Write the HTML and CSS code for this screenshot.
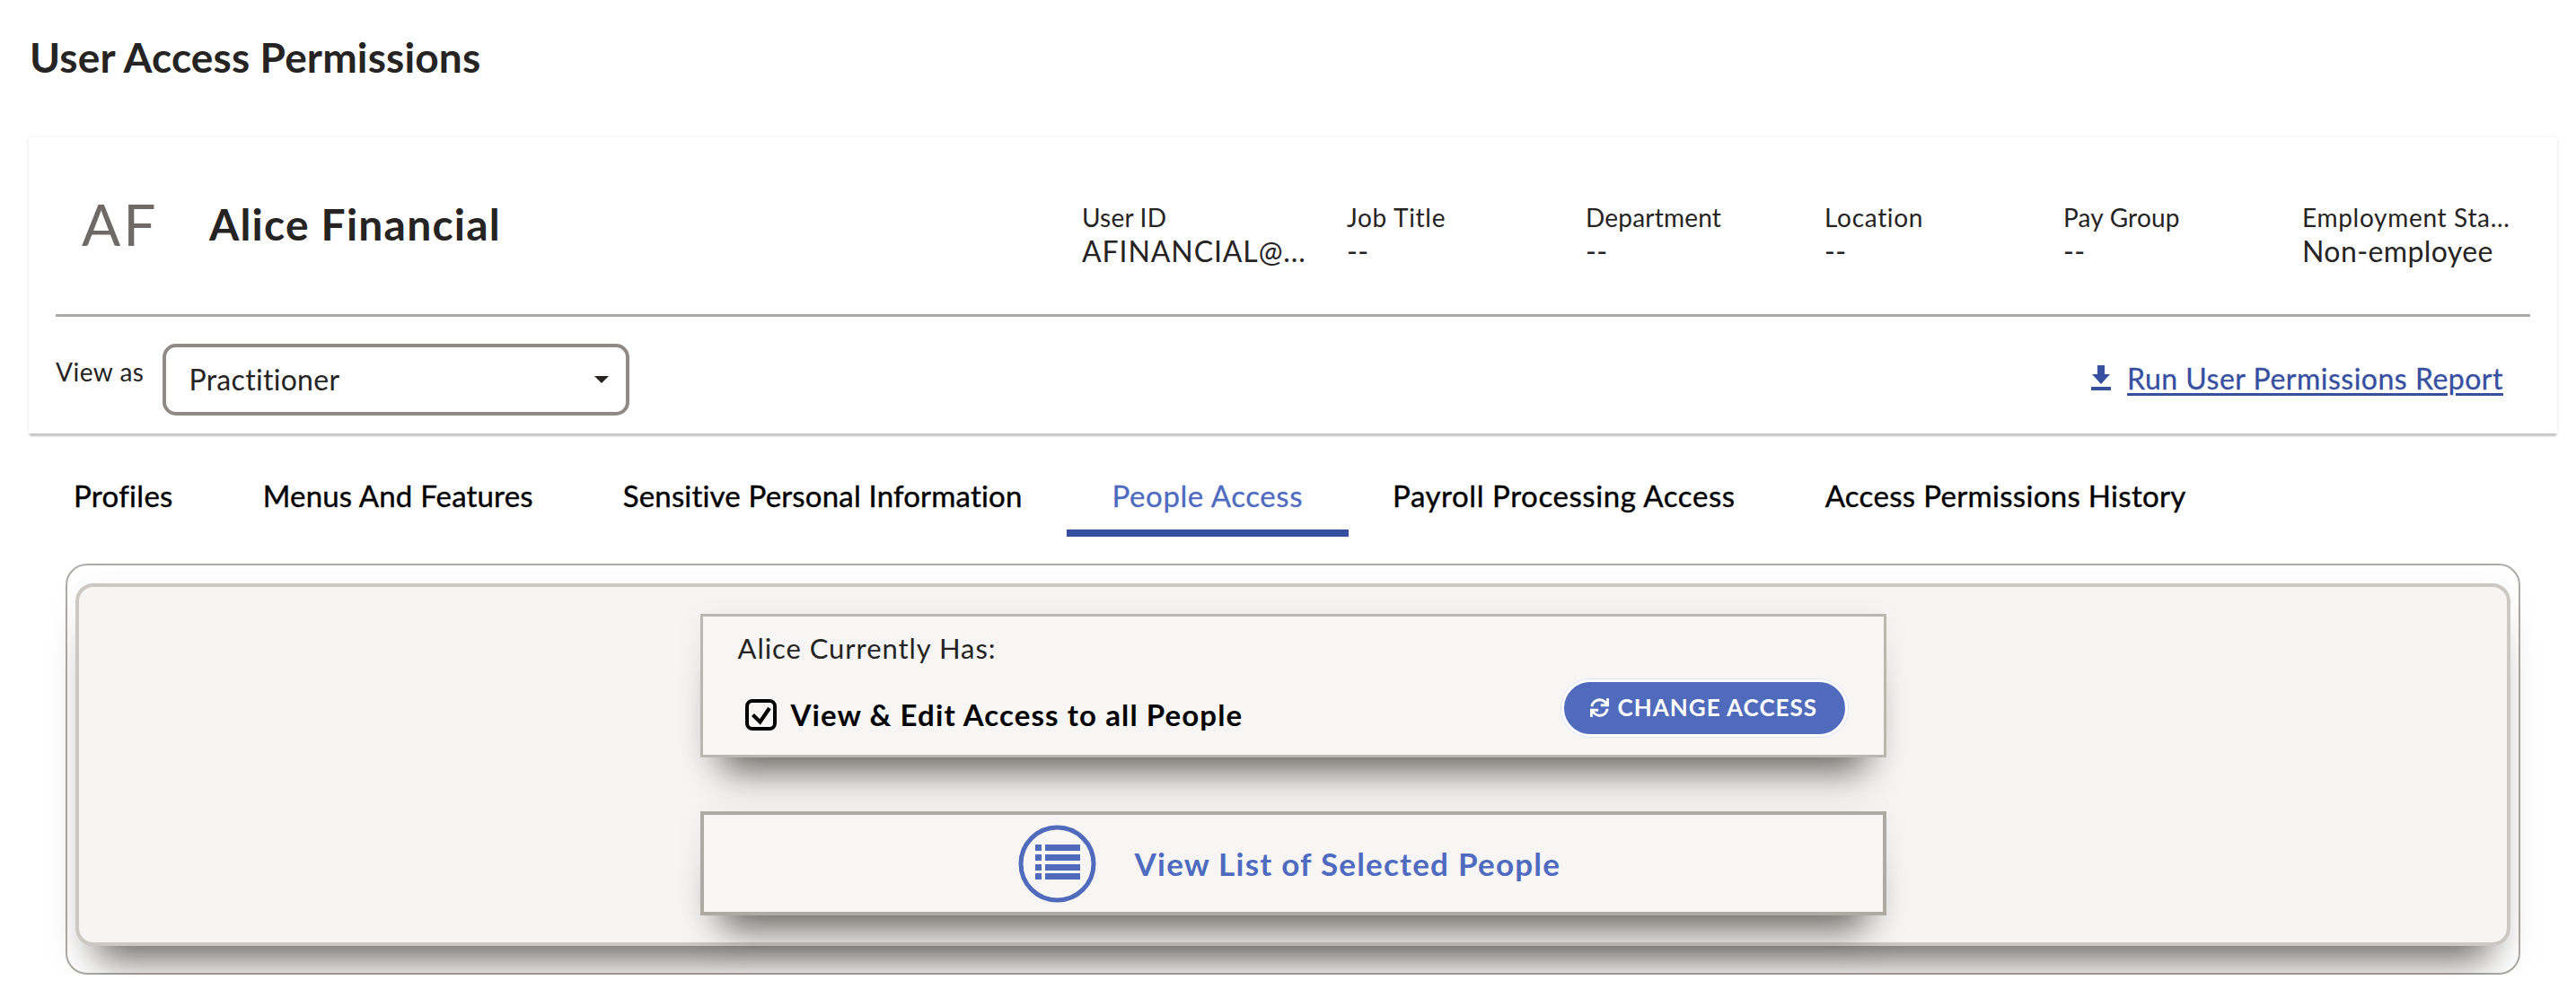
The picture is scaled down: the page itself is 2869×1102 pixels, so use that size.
FILE: index.html
```html
<!DOCTYPE html>
<html lang="en">
<head>
<meta charset="utf-8">
<title>User Access Permissions</title>
<link rel="stylesheet" href="styles.css">
</head>
<body>
<h1 class="page-title">User Access Permissions</h1>

<section class="user-card">
  <div class="user-top">
    <div class="identity">
      <span class="avatar">AF</span>
      <span class="user-name">Alice Financial</span>
    </div>
    <dl class="facts">
      <div class="fact"><dt>User ID</dt><dd class="fact-id">AFINANCIAL@...</dd></div>
      <div class="fact"><dt class="label-wide">Job Title</dt><dd>--</dd></div>
      <div class="fact"><dt>Department</dt><dd>--</dd></div>
      <div class="fact"><dt class="label-wide">Location</dt><dd>--</dd></div>
      <div class="fact"><dt>Pay Group</dt><dd>--</dd></div>
      <div class="fact fact-last"><dt class="label-wide">Employment Sta...</dt><dd>Non-employee</dd></div>
    </dl>
  </div>
  <div class="user-bottom">
    <div class="view-as">
      <span class="view-label">View as</span>
      <div class="select"><span>Practitioner</span><i class="caret"></i></div>
    </div>
    <a class="report-link" href="#">
      <svg class="report-icon" viewBox="0 0 22 28" width="22" height="28"><path d="M7 0h8v10h6L11 21 1 10h6z"/><rect y="24" width="22" height="4"/></svg>
      <span>Run User Permissions Report</span>
    </a>
  </div>
</section>

<nav class="tabs">
  <a class="tab">Profiles</a>
  <a class="tab tab-tight">Menus And Features</a>
  <a class="tab tab-tight">Sensitive Personal Information</a>
  <a class="tab tab-loose tab-active">People Access</a>
  <a class="tab tab-loose">Payroll Processing Access</a>
  <a class="tab">Access Permissions History</a>
</nav>

<section class="outer-box">
  <div class="panel">
    <div class="access-card">
      <div class="access-label">Alice Currently Has:</div>
      <div class="access-row">
        <div class="access-value">
          <svg class="check-icon" viewBox="0 0 35 35" width="35" height="35"><rect x="2" y="2" width="31" height="31" rx="6" fill="none" stroke="#000" stroke-width="4"/><path d="M8.5 17.5l8 8L27 10" fill="none" stroke="#000" stroke-width="4.2"/></svg>
          <span>View &amp; Edit Access to all People</span>
        </div>
        <button class="change-btn">
          <svg class="sync-icon" viewBox="0 0 512 512" width="21" height="21"><path fill="#fff" d="M440.65 12.57l4 82.77A247.16 247.16 0 0 0 255.83 8C134.73 8 33.91 94.92 12.29 209.82A12 12 0 0 0 24.09 224h49.05a12 12 0 0 0 11.67-9.26 175.91 175.91 0 0 1 317-56.94l-101.46-4.86a12 12 0 0 0-12.57 12v47.41a12 12 0 0 0 12 12H500a12 12 0 0 0 12-12V12a12 12 0 0 0-12-12h-47.37a12 12 0 0 0-11.98 12.57zM255.83 432a175.61 175.61 0 0 1-146-77.8l101.8 4.87a12 12 0 0 0 12.57-12v-47.4a12 12 0 0 0-12-12H12a12 12 0 0 0-12 12V500a12 12 0 0 0 12 12h47.35a12 12 0 0 0 12-12.6l-4.15-82.57A247.17 247.17 0 0 0 255.83 504c121.11 0 221.93-86.92 243.55-201.82a12 12 0 0 0-11.8-14.18h-49.05a12 12 0 0 0-11.67 9.26A175.86 175.86 0 0 1 255.83 432z"/></svg>
          <span>CHANGE ACCESS</span>
        </button>
      </div>
    </div>
    <div class="list-card">
      <svg class="list-icon" viewBox="0 0 87 87" width="87" height="87">
        <circle cx="43.5" cy="43.5" r="40.5" fill="none" stroke="#506bbc" stroke-width="5"/>
        <g fill="#506bbc">
          <rect x="19" y="22" width="7" height="7"/><rect x="30" y="22" width="39" height="7"/>
          <rect x="19" y="33" width="7" height="7"/><rect x="30" y="33" width="39" height="7"/>
          <rect x="19" y="44" width="7" height="7"/><rect x="30" y="44" width="39" height="7"/>
          <rect x="19" y="54" width="7" height="7"/><rect x="30" y="54" width="39" height="7"/>
        </g>
      </svg>
      <span class="list-text">View List of Selected People</span>
    </div>
  </div>
</section>
</body>
</html>
```

FILE: styles.css
```css
* { box-sizing: border-box; }
html, body { margin: 0; background: #fff; }
body {
  font-family: "Lato", "Liberation Sans", sans-serif;
  color: #252423;
  overflow: hidden;
}
.page-title {
  margin: 0 0 61px 33px;
  padding-top: 36px;
  font-size: 46px;
  line-height: 56px;
  font-weight: 700;
  letter-spacing: 0.15px;
}
.user-card {
  width: 2816px;
  height: 330px;
  margin-left: 32px;
  padding: 0 30px;
  background: #fff;
  box-shadow: 0 4px 2px -1px #c4c4c4, 0 0 4px rgba(0,0,0,.08);
}
.user-top {
  height: 200px;
  border-bottom: 3px solid #b0aaa4;
  display: flex;
  align-items: center;
  justify-content: space-between;
}
.identity { display: flex; align-items: center; margin-top: -3px; }
.avatar {
  width: 171px;
  padding-left: 29px;
  font-size: 64px;
  font-weight: 400;
  letter-spacing: 3px;
  color: #6f6a66;
  line-height: 80px;
}
.user-name {
  font-size: 48px;
  font-weight: 700;
  letter-spacing: 1.2px;
  color: #252423;
  line-height: 60px;
}
.facts { display: flex; margin: 19px 0 0; }
.fact { width: 266px; }
.fact:first-child { width: 295px; }
.fact-last { width: 254px; }
.fact dt {
  font-size: 28px;
  line-height: 36px;
  letter-spacing: .2px;
  white-space: nowrap;
}
.fact .label-wide { letter-spacing: .7px; }
.fact dd {
  margin: 1px 0 0;
  font-size: 32px;
  line-height: 38px;
  letter-spacing: .4px;
  white-space: nowrap;
}
.fact .fact-id { letter-spacing: .9px; }
.user-bottom {
  height: 130px;
  padding: 10px 30px 0 0;
  display: flex;
  align-items: center;
  justify-content: space-between;
}
.view-as { display: flex; align-items: center; gap: 21px; }
.view-label { font-size: 28px; letter-spacing: .5px; margin-top: -18px; }
.select {
  width: 520px;
  height: 80px;
  border: 4px solid #8f8a83;
  border-radius: 15px;
  padding: 0 19px 2px 25px;
  display: flex;
  align-items: center;
  justify-content: space-between;
  font-size: 32px;
  letter-spacing: .3px;
}
.caret {
  width: 0;
  height: 0;
  border-left: 8px solid transparent;
  border-right: 8px solid transparent;
  border-top: 8px solid #252423;
  margin-top: 2px;
}
.report-link {
  display: flex;
  align-items: center;
  gap: 18px;
  color: #364f9f;
  font-size: 32px;
  letter-spacing: .5px;
  line-height: 38px;
  margin-top: -2px;
  text-decoration: underline;
  text-underline-offset: 4px;
  -webkit-text-stroke: .3px #364f9f;
}
.report-icon { fill: #364f9f; margin-top: -2px; }
.tabs { display: flex; margin: 4px 0 0 31px; }
.tab {
  height: 111px;
  padding: 27px 51px 0;
  margin-right: -2px;
  display: flex;
  align-items: center;
  font-size: 33px;
  letter-spacing: .32px;
  color: #000;
  -webkit-text-stroke: .4px #000;
  border-bottom: 8px solid transparent;
}
.tab-tight { letter-spacing: .18px; }
.tab-loose { letter-spacing: .58px; }
.tab-active {
  color: #4f6bbf;
  -webkit-text-stroke: .3px #4f6bbf;
  border-bottom-color: #364f9f;
}
.outer-box {
  width: 2734px;
  height: 458px;
  margin: 30px 0 0 73px;
  padding: 20px 9px 30px;
  border: 2px solid #b0aaa4;
  border-radius: 24px;
}
.panel {
  height: 404px;
  padding-top: 30px;
  border: 4px solid #cdc8c2;
  border-radius: 20px;
  background: #f6f5f3;
  display: flex;
  flex-direction: column;
  align-items: center;
  gap: 60px;
  box-shadow: 0 40px 40px -25px rgba(60,56,50,.75), 0 6px 36px rgba(0,0,0,.06);
}
.access-card, .list-card {
  width: 1321px;
  background: #f7f6f4;
  box-shadow: 0 40px 40px -25px rgba(60,56,50,.75), 0 4px 30px rgba(0,0,0,.06);
}
.access-card {
  height: 160px;
  padding: 17px 39px 0;
  border: 3px solid #bab6b0;
}
.access-label { font-size: 31px; letter-spacing: .95px; line-height: 36px; }
.access-row {
  margin-top: 16px;
  display: flex;
  align-items: center;
  justify-content: space-between;
}
.access-value {
  display: flex;
  align-items: center;
  gap: 16px;
  margin-top: 14px;
  padding-left: 8px;
  font-size: 33px;
  font-weight: 700;
  letter-spacing: 1.1px;
  color: #000;
}
.change-btn {
  width: 321px;
  height: 66px;
  padding: 0 0 2px 29px;
  border: 4px solid #fff;
  border-radius: 33px;
  outline: 1px solid #dfe4f5;
  outline-offset: -1px;
  background: #506bbc;
  color: #fff;
  font-family: inherit;
  font-size: 26px;
  font-weight: 700;
  letter-spacing: 1px;
  display: flex;
  align-items: center;
  gap: 10px;
}
.list-card {
  height: 116px;
  border: 4px solid #b0aaa4;
  display: flex;
  align-items: center;
  padding-left: 350px;
  gap: 43px;
}
.list-text { font-size: 35px; font-weight: 700; letter-spacing: 1.22px; color: #4f6bbf; }
```
